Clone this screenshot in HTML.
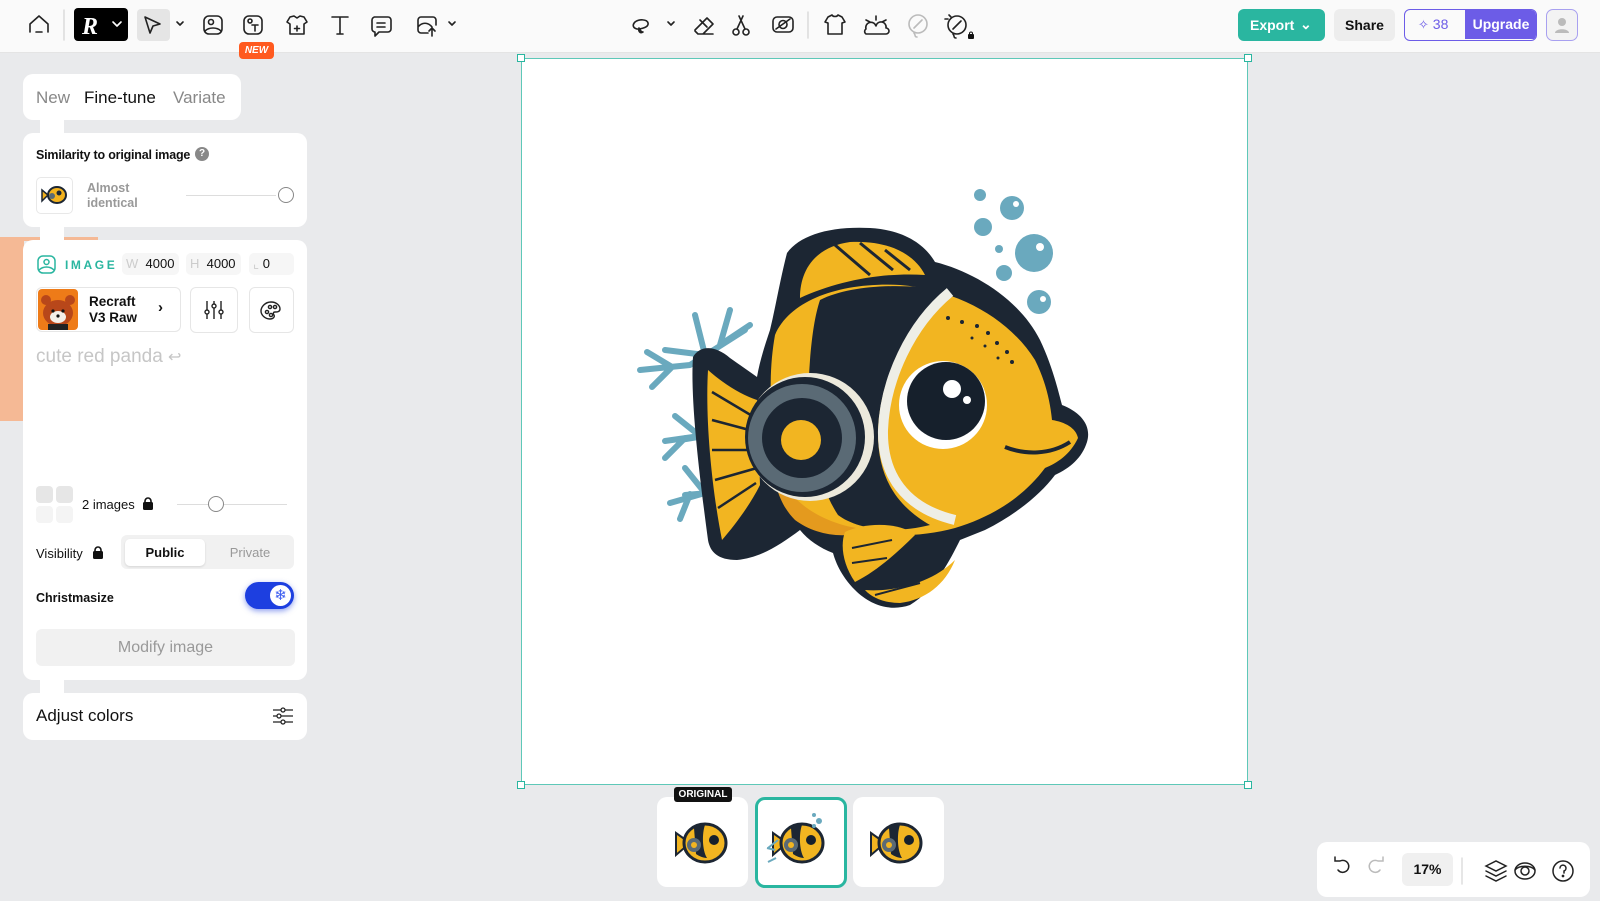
<!DOCTYPE html>
<html><head><meta charset="utf-8"><style>
*{box-sizing:border-box;margin:0;padding:0}
body{width:1600px;height:901px;overflow:hidden;background:#e9eaec;font-family:"Liberation Sans",sans-serif;position:relative;color:#111}
.a{position:absolute}
.top{left:0;top:0;width:1600px;height:53px;background:#fafafa;border-bottom:1px solid #e4e4e4}
.card{position:absolute;background:#fff;border-radius:10px}
.lbl{font-size:12.5px;font-weight:bold}
.fld{position:absolute;background:#f6f6f6;border-radius:5px;height:22px;font-size:13px;line-height:22px}
svg{overflow:visible}
</style></head><body>
<div class="a top"></div>
<svg class="a" style="left:0;top:0" width="480" height="60" fill="none" stroke="#222" stroke-width="1.6" stroke-linecap="round" stroke-linejoin="round">
<path d="M30 32v-8l9-8 9 8v8M36 32h6"/>
<line x1="64" y1="10" x2="64" y2="40" stroke="#ddd"/>
<rect x="74" y="8" width="54" height="33" rx="4" fill="#000" stroke="none"/>
<text x="82" y="34" font-size="24" font-weight="bold" fill="#fff" stroke="none" font-family="Liberation Serif" font-style="italic">R</text>
<path d="M113 22l4 4 4-4" stroke="#fff"/>
<rect x="137" y="9" width="33" height="32" rx="4" fill="#e5e5e5" stroke="none"/>
<path d="M145 17l15 7-7 2-3 7z"/>
<path d="M177 22l3 3 3-3"/>
<rect x="204" y="16" width="18" height="18" rx="5"/><circle cx="211" cy="22" r="2.5"/><path d="M205 31c4-4 12-4 16 0"/>
<rect x="244" y="16" width="18" height="18" rx="5"/><circle cx="250" cy="21" r="2"/><path d="M252 25h6M255 25v6"/>
<path d="M290 17l4-1 3 2 3-2 4 1 3 5-3 2v10h-14v-10l-3-2zM297 26v5M294.5 28.5h5"/>
<path d="M332 17h16M340 17v17M337 34h6"/>
<path d="M374 17h14a3 3 0 0 1 3 3v9a3 3 0 0 1-3 3h-9l-4 4v-4a3 3 0 0 1-3-3v-9a3 3 0 0 1 3-3zM377 23h8M377 27h8"/>
<path d="M428 33h-7a3 3 0 0 1-3-3v-10a3 3 0 0 1 3-3h12a3 3 0 0 1 3 3v5M418 27c4-5 10-5 14 0M432 36v-8M429 31l3-3 3 3"/>
<path d="M449 22l3 3 3-3"/>
</svg>
<div class="a" style="left:239px;top:42px;width:35px;height:17px;background:#ff5a1f;border-radius:4px;color:#fff;font-size:10px;font-weight:bold;font-style:italic;text-align:center;line-height:17px">NEW</div>
<svg class="a" style="left:600px;top:0" width="400" height="60" fill="none" stroke="#222" stroke-width="1.6" stroke-linecap="round" stroke-linejoin="round">
<path d="M37 29c-4-1-5-4-2-7 4-3 12-3 13 1 1 4-6 6-11 6M39 28c-1 3 1 6 4 4-2 0-3-2-3-3"/>
<path d="M68 22l3 3 3-3"/>
<path d="M95 30l12-12 6 6-10 10h-5l-3-3zM100 20l7 7M103 34h10"/>
<circle cx="136" cy="32" r="3"/><circle cx="146" cy="32" r="3"/><path d="M137 29l6-13M145 29l-6-13"/>
<rect x="173" y="17" width="20" height="15" rx="4"/><circle cx="183" cy="24.5" r="4"/><path d="M176 29l14-10"/>
<line x1="208" y1="12" x2="208" y2="38" stroke="#ddd"/>
<path d="M228 17l4-2c1 2 5 2 6 0l4 2 3 5-3 1v11h-14v-11l-3-1z"/>
<path d="M266 34h20a3 3 0 0 0 0-6 5 5 0 0 0-10-2 5 5 0 0 0-10 3 3 3 0 0 0 0 5zM276 20v-4M266 20l4 2M286 20l-4 2"/>
<circle cx="318" cy="24" r="9" stroke="#bbb"/><path d="M314 28l8-8M314 33c2 2 0 4 3 4" stroke="#bbb"/>
<circle cx="357" cy="25" r="9"/><path d="M353 29l8-8M353 34c2 2 0 4 3 4M349 15l2 2M345 19h3"/>
</svg>
<svg class="a" style="left:967px;top:31px" width="8" height="8"><rect x="1" y="3" width="6" height="5" rx="1" fill="#111"/><path d="M2.5 3.5v-1a1.5 1.5 0 0 1 3 0v1" stroke="#111" fill="none"/></svg>
<div class="a" style="left:1238px;top:9px;width:87px;height:32px;background:#2ab6a0;border-radius:6px;color:#fff;font-size:14px;font-weight:bold;line-height:32px;padding-left:12px">Export <span style="position:absolute;left:62px;top:-1px">&#8964;</span></div>
<div class="a" style="left:1334px;top:9px;width:61px;height:32px;background:#ededed;border-radius:6px;font-size:14px;font-weight:bold;line-height:32px;text-align:center">Share</div>
<div class="a" style="left:1404px;top:9px;width:133px;height:32px;border:1.5px solid #6c5ce7;border-radius:6px;overflow:hidden">
<div class="a" style="left:0;top:0;width:60px;height:29px;color:#6c5ce7;font-size:14px;line-height:29px;padding-left:13px"><span style="font-size:13px">&#10023;</span> 38</div>
<div class="a" style="left:60px;top:0;width:72px;height:29px;background:#6c5ce7;color:#fff;font-size:14px;font-weight:bold;line-height:29px;text-align:center">Upgrade</div></div>
<div class="a" style="left:1546px;top:9px;width:32px;height:32px;border:1.5px solid #a8a0f0;border-radius:7px;background:#f3f3f3"><svg width="30" height="30"><circle cx="15" cy="12" r="4" fill="#bbb"/><path d="M8 23c0-5 14-5 14 0z" fill="#bbb"/></svg></div>

<div class="a" style="left:0;top:237px;width:24px;height:184px;background:#f5b995"></div>
<div class="a" style="left:0;top:237px;width:98px;height:4px;background:#f5b995"></div>
<div class="card" style="left:23px;top:74px;width:218px;height:46px"></div>
<div class="a" style="left:36px;top:88px;font-size:17px;color:#888">New</div>
<div class="a" style="left:84px;top:88px;font-size:17px;color:#111">Fine-tune</div>
<div class="a" style="left:173px;top:88px;font-size:17px;color:#888">Variate</div>
<div class="a" style="left:40px;top:118px;width:24px;height:16px;background:#fff"></div>
<div class="card" style="left:23px;top:133px;width:284px;height:94px"></div>
<div class="a lbl" style="left:36px;top:148px;letter-spacing:-0.2px">Similarity to original image</div>
<div class="a" style="left:195px;top:147px;width:14px;height:14px;border-radius:7px;background:#888;color:#fff;font-size:10px;text-align:center;line-height:14px;font-weight:bold">?</div>
<div class="a" style="left:36px;top:177px;width:37px;height:37px;border:1px solid #e8e8e8;border-radius:5px"></div>
<svg class="a" style="left:40px;top:183px" width="30" height="24"><ellipse cx="17" cy="12" rx="9" ry="8" fill="#f2b21e" stroke="#1c2633" stroke-width="2"/><path d="M8 12l-6-5v11z" fill="#f2b21e" stroke="#1c2633" stroke-width="1.5"/><circle cx="19" cy="10" r="2.5" fill="#1c2633"/><circle cx="12" cy="13" r="3" fill="#5a6a75"/></svg>
<div class="a" style="left:87px;top:181px;font-size:12.5px;color:#999;font-weight:bold;line-height:15px">Almost<br>identical</div>
<div class="a" style="left:186px;top:195px;width:90px;height:1px;background:#ddd"></div>
<div class="a" style="left:278px;top:187px;width:16px;height:16px;border:1.5px solid #888;border-radius:50%;background:#fff"></div>
<div class="a" style="left:40px;top:225px;width:24px;height:16px;background:#fff"></div>
<div class="card" style="left:23px;top:240px;width:284px;height:440px"></div>
<svg class="a" style="left:37px;top:255px" width="20" height="20" fill="none" stroke="#2ab6a0" stroke-width="1.5"><rect x="1" y="1" width="17" height="17" rx="5"/><circle cx="9.5" cy="7" r="2.5"/><path d="M2 15c4-4 11-4 15 0"/></svg>
<div class="a" style="left:65px;top:258px;font-size:12px;font-weight:bold;color:#2ab6a0;letter-spacing:2.6px">IMAGE</div>
<div class="fld" style="left:122px;top:253px;width:57px;padding-left:4px"><span style="color:#ccc">W</span>&nbsp; 4000</div>
<div class="fld" style="left:186px;top:253px;width:55px;padding-left:4px"><span style="color:#ccc">H</span>&nbsp; 4000</div>
<div class="fld" style="left:249px;top:253px;width:45px;padding-left:4px"><span style="color:#ccc">&#8990;</span> 0</div>
<div class="a" style="left:36px;top:287px;width:145px;height:45px;border:1px solid #e6e6e6;border-radius:6px"></div>
<div class="a" style="left:38px;top:289px;width:40px;height:41px;border-radius:4px;background:#ee7b18;overflow:hidden">
<svg width="40" height="41"><ellipse cx="20" cy="24" rx="15" ry="13" fill="#b8471a"/><circle cx="8" cy="11" r="5" fill="#b8471a"/><circle cx="32" cy="11" r="5" fill="#b8471a"/><ellipse cx="20" cy="28" rx="8" ry="6" fill="#f4efe8"/><circle cx="15" cy="22" r="1.6" fill="#111"/><circle cx="25" cy="22" r="1.6" fill="#111"/><circle cx="20" cy="27" r="1.6" fill="#111"/><rect x="10" y="35" width="20" height="6" fill="#222"/></svg></div>
<div class="a" style="left:89px;top:294px;font-size:13.5px;font-weight:bold;line-height:16px">Recraft<br>V3 Raw</div>
<div class="a" style="left:158px;top:299px;font-size:15px;font-weight:bold">&#8250;</div>
<div class="a" style="left:190px;top:287px;width:48px;height:46px;border:1px solid #e6e6e6;border-radius:6px"></div>
<svg class="a" style="left:203px;top:299px" width="22" height="22" fill="none" stroke="#222" stroke-width="1.4"><path d="M4 2v9M4 15v5M11 2v3M11 9v11M18 2v9M18 15v5"/><circle cx="4" cy="13" r="2"/><circle cx="11" cy="7" r="2"/><circle cx="18" cy="13" r="2"/></svg>
<div class="a" style="left:249px;top:287px;width:45px;height:46px;border:1px solid #e6e6e6;border-radius:6px"></div>
<svg class="a" style="left:260px;top:300px" width="22" height="20" fill="none" stroke="#222" stroke-width="1.4"><path d="M11 2c6 0 9 4 9 7s-3 3-5 3-2 2-1 3c1 2-1 4-4 4-5 0-9-4-9-8s4-9 10-9z"/><circle cx="7" cy="12" r="1.6"/><circle cx="10" cy="7" r="1.6"/><circle cx="15" cy="7" r="1.6"/><circle cx="11" cy="15" r="1.6"/></svg>
<div class="a" style="left:36px;top:346px;font-size:19px;color:#c6c6c6">cute red panda <span style="font-size:16px">&#8617;</span></div>
<div class="a" style="left:36px;top:486px;width:17px;height:17px;background:#e6e6e6;border-radius:4px"></div>
<div class="a" style="left:56px;top:486px;width:17px;height:17px;background:#e6e6e6;border-radius:4px"></div>
<div class="a" style="left:36px;top:506px;width:17px;height:17px;background:#f4f4f4;border-radius:4px"></div>
<div class="a" style="left:56px;top:506px;width:17px;height:17px;background:#f4f4f4;border-radius:4px"></div>
<div class="a" style="left:82px;top:497px;font-size:13px">2 images</div>
<svg class="a" style="left:142px;top:497px" width="12" height="13"><rect x="1" y="5" width="10" height="8" rx="1.5" fill="#111"/><path d="M3 6v-2a3 3 0 0 1 6 0v2" stroke="#111" stroke-width="1.6" fill="none"/></svg>
<div class="a" style="left:177px;top:504px;width:110px;height:1px;background:#ddd"></div>
<div class="a" style="left:208px;top:496px;width:16px;height:16px;border:1.5px solid #888;border-radius:50%;background:#fff"></div>
<div class="a" style="left:36px;top:546px;font-size:13px">Visibility</div>
<svg class="a" style="left:92px;top:546px" width="12" height="13"><rect x="1" y="5" width="10" height="8" rx="1.5" fill="#111"/><path d="M3 6v-2a3 3 0 0 1 6 0v2" stroke="#111" stroke-width="1.6" fill="none"/></svg>
<div class="a" style="left:121px;top:535px;width:173px;height:34px;background:#f1f1f1;border-radius:6px"></div>
<div class="a" style="left:125px;top:539px;width:80px;height:27px;background:#fff;border-radius:5px;box-shadow:0 1px 2px rgba(0,0,0,.12);font-size:13px;font-weight:bold;text-align:center;line-height:27px">Public</div>
<div class="a" style="left:212px;top:539px;width:76px;height:27px;font-size:13px;color:#999;text-align:center;line-height:27px">Private</div>
<div class="a lbl" style="left:36px;top:591px">Christmasize</div>
<div class="a" style="left:245px;top:582px;width:49px;height:27px;background:#1d3fe0;border-radius:14px;box-shadow:0 2px 6px rgba(29,63,224,.5)"></div>
<div class="a" style="left:270px;top:585px;width:21px;height:21px;background:#fff;border-radius:50%;color:#3b5cf0;font-size:15px;text-align:center;line-height:21px">&#10052;</div>
<div class="a" style="left:36px;top:629px;width:259px;height:37px;background:#f1f1f1;border-radius:6px;font-size:16px;color:#999;text-align:center;line-height:37px">Modify image</div>
<div class="a" style="left:40px;top:678px;width:24px;height:17px;background:#fff"></div>
<div class="card" style="left:23px;top:693px;width:284px;height:47px"></div>
<div class="a" style="left:36px;top:706px;font-size:17px">Adjust colors</div>
<svg class="a" style="left:272px;top:706px" width="22" height="20" fill="none" stroke="#222" stroke-width="1.3"><path d="M1 4h8M13 4h8M1 10h4M9 10h12M1 16h8M13 16h8"/><circle cx="11" cy="4" r="2"/><circle cx="7" cy="10" r="2"/><circle cx="11" cy="16" r="2"/></svg>

<div class="a" style="left:521px;top:58px;width:727px;height:727px;background:#fff;border:1.5px solid #5ec8b8"></div>
<div class="a" style="left:517px;top:54px;width:8px;height:8px;background:#fff;border:1px solid #2ab6a0"></div>
<div class="a" style="left:1244px;top:54px;width:8px;height:8px;background:#fff;border:1px solid #2ab6a0"></div>
<div class="a" style="left:517px;top:781px;width:8px;height:8px;background:#fff;border:1px solid #2ab6a0"></div>
<div class="a" style="left:1244px;top:781px;width:8px;height:8px;background:#fff;border:1px solid #2ab6a0"></div>
<svg class="a" style="left:0;top:0" width="1600" height="901">
<g stroke="#6aa9be" stroke-width="6" stroke-linecap="round" fill="none">
<path d="M745 330l-55 35M705 355l-10-40M705 355l-40-5M690 365l-50 5M672 367l-25-15M672 367l-20 20M720 345l10-35M720 345l30-20"/>
<path d="M740 430l-60 10M700 436l-25-20M700 436l-35 5M685 438l-20 20M710 434l-5-30"/>
<path d="M745 490l-60 5M705 493l-20-25M705 493l-35 10M690 494l-10 25M720 492l-5 25"/>
</g>
<g fill="#6aa9be"><circle cx="980" cy="195" r="6"/><circle cx="1012" cy="208" r="12"/><circle cx="983" cy="227" r="9"/><circle cx="999" cy="249" r="4"/><circle cx="1034" cy="253" r="19"/><circle cx="1004" cy="273" r="8"/><circle cx="1039" cy="302" r="12"/></g>
<g fill="#fff"><circle cx="1040" cy="247" r="4"/><circle cx="1016" cy="204" r="3"/><circle cx="1043" cy="299" r="3"/></g>
<path fill="#1c2633" d="M787 253C800 235 830 226 870 228C905 230 925 245 935 262C975 272 1020 300 1040 340C1052 365 1058 390 1062 405C1080 412 1092 425 1087 442C1082 458 1070 468 1055 475C1040 495 1015 515 985 530L960 540C950 560 935 590 910 605C890 612 870 605 855 590C840 575 835 560 833 553C820 548 808 540 800 530C780 545 760 558 737 560C718 560 710 552 708 540C700 480 690 400 693 357C700 345 715 345 730 358C740 365 750 372 757 377C760 360 765 345 770 330C775 310 780 280 787 253Z"/>
<path fill="#f2b521" d="M800 298C800 270 815 247 850 242C890 240 915 255 925 275C880 272 835 282 800 298Z"/>
<g stroke="#1c2633" stroke-width="3"><path d="M835 245l35 30M860 243l33 27M885 250l25 20"/></g>
<path fill="#f2b521" d="M708 370C725 385 742 395 757 400L760 485C750 505 735 525 722 540C712 490 705 420 708 370Z"/>
<g stroke="#1c2633" stroke-width="2.5"><path d="M712 392l42 25M712 420l45 12M712 450l45 0M715 480l42-12M718 508l38-25"/></g>
<path fill="#f2b521" d="M775 335C790 300 840 282 900 285C960 290 1010 320 1035 360C1045 380 1050 400 1052 420C1065 422 1076 428 1078 438C1070 455 1057 463 1045 468C1025 495 995 516 955 528C900 543 830 535 800 505C772 470 765 390 775 335Z"/>
<path fill="#e49a1e" d="M772 460C785 500 820 525 870 530C845 540 815 535 795 520C780 505 774 485 772 460Z"/>
<path fill="#1c2633" d="M820 300C850 285 900 283 945 290C905 325 880 380 878 430C877 475 895 505 930 525C890 535 855 528 838 515C815 480 805 420 810 360C812 335 815 315 820 300Z"/>
<path fill="none" stroke="#eeeee6" stroke-width="10" d="M950 292C910 325 885 380 883 430C882 475 905 508 955 520"/>
<g fill="#1c2633"><circle cx="948" cy="318" r="2"/><circle cx="962" cy="322" r="2"/><circle cx="977" cy="326" r="2"/><circle cx="988" cy="333" r="2"/><circle cx="997" cy="343" r="2"/><circle cx="1007" cy="352" r="2"/><circle cx="1012" cy="362" r="2"/><circle cx="972" cy="338" r="1.5"/><circle cx="985" cy="346" r="1.5"/><circle cx="998" cy="358" r="1.5"/></g>
<circle cx="943" cy="405" r="44" fill="#fff"/><circle cx="946" cy="401" r="39" fill="#16202c"/><circle cx="952" cy="389" r="9" fill="#fff"/><circle cx="967" cy="400" r="4" fill="#fff"/>
<path d="M1005 447c20 8 45 8 65-5" stroke="#1c2633" stroke-width="4" fill="none"/>
<circle cx="810" cy="437" r="64" fill="#ece9dc"/><circle cx="805" cy="437" r="60" fill="#1c2633"/><circle cx="802" cy="438" r="54" fill="#5a6a75"/><circle cx="802" cy="438" r="40" fill="#1c2633"/><circle cx="801" cy="440" r="20" fill="#f2b521"/>
<path fill="#f2b521" d="M845 532C865 522 900 522 915 535C895 555 875 572 855 582C843 565 840 545 845 532Z"/>
<path fill="#f2b521" d="M865 590C890 592 930 585 955 560C945 585 925 600 900 603C885 603 872 598 865 590Z"/>
<g stroke="#1c2633" stroke-width="2"><path d="M852 548l40-8M852 563l35-5M875 595l45-12"/></g>
</svg>
<div class="card" style="left:657px;top:797px;width:91px;height:90px"></div>
<div class="card" style="left:755px;top:797px;width:92px;height:91px;border:3px solid #2ab6a0"></div>
<div class="card" style="left:853px;top:797px;width:91px;height:90px"></div>
<div class="a" style="left:674px;top:787px;width:58px;height:15px;background:#111;border-radius:3px;color:#fff;font-size:10px;font-weight:bold;text-align:center;line-height:15px">ORIGINAL</div>
<svg class="a" style="left:0;top:0" width="1600" height="901">
<g id="f"><path d="M690 843l-14-10v22z" fill="#f2b521" stroke="#1c2633" stroke-width="2"/><ellipse cx="705" cy="843" rx="21" ry="19" fill="#f2b521" stroke="#1c2633" stroke-width="3"/><path d="M694 828c4-2 8-3 11-3-3 8-3 25 2 33-4 0-8-2-11-4z" fill="#1c2633"/><circle cx="714" cy="840" r="5" fill="#16202c"/><circle cx="694" cy="845" r="7" fill="#5a6a75"/><circle cx="694" cy="845" r="3" fill="#f2b521"/></g>
<use href="#f" x="97"/><use href="#f" x="195"/>
<g fill="#6aa9be"><circle cx="814" cy="815" r="2"/><circle cx="819" cy="821" r="3"/><circle cx="814" cy="826" r="2"/></g>
<path d="M778 840l-10 8M775 850l-8-2M776 858l-8 4" stroke="#6aa9be" stroke-width="2"/>
</svg>
<div class="card" style="left:1317px;top:842px;width:273px;height:55px"></div>
<svg class="a" style="left:1310px;top:830px" width="290" height="71" fill="none" stroke="#222" stroke-width="1.5" stroke-linecap="round">
<path d="M28 40a6 6 0 1 0 2-9h-5M25 27v4h4"/>
<path d="M70 40a6 6 0 1 1-2-9h5M73 27v4h-4" stroke="#bbb"/>
<line x1="152" y1="28" x2="152" y2="54" stroke="#ddd"/>
<path d="M176 36l10-5 10 5-10 5zM176 41l10 5 10-5M176 46l10 5 10-5"/>
<ellipse cx="215" cy="41" rx="10" ry="8"/><circle cx="215" cy="41" r="4"/><path d="M205 40c4-5 16-5 20 0"/>
<circle cx="253" cy="41" r="10"/><path d="M250 38a3 3 0 1 1 4 3v2"/><circle cx="253" cy="46" r=".6" fill="#222"/>
</svg>
<div class="a" style="left:1402px;top:853px;width:51px;height:33px;background:#f0f0f0;border-radius:6px;font-size:14px;font-weight:bold;text-align:center;line-height:33px">17%</div>
</body></html>
